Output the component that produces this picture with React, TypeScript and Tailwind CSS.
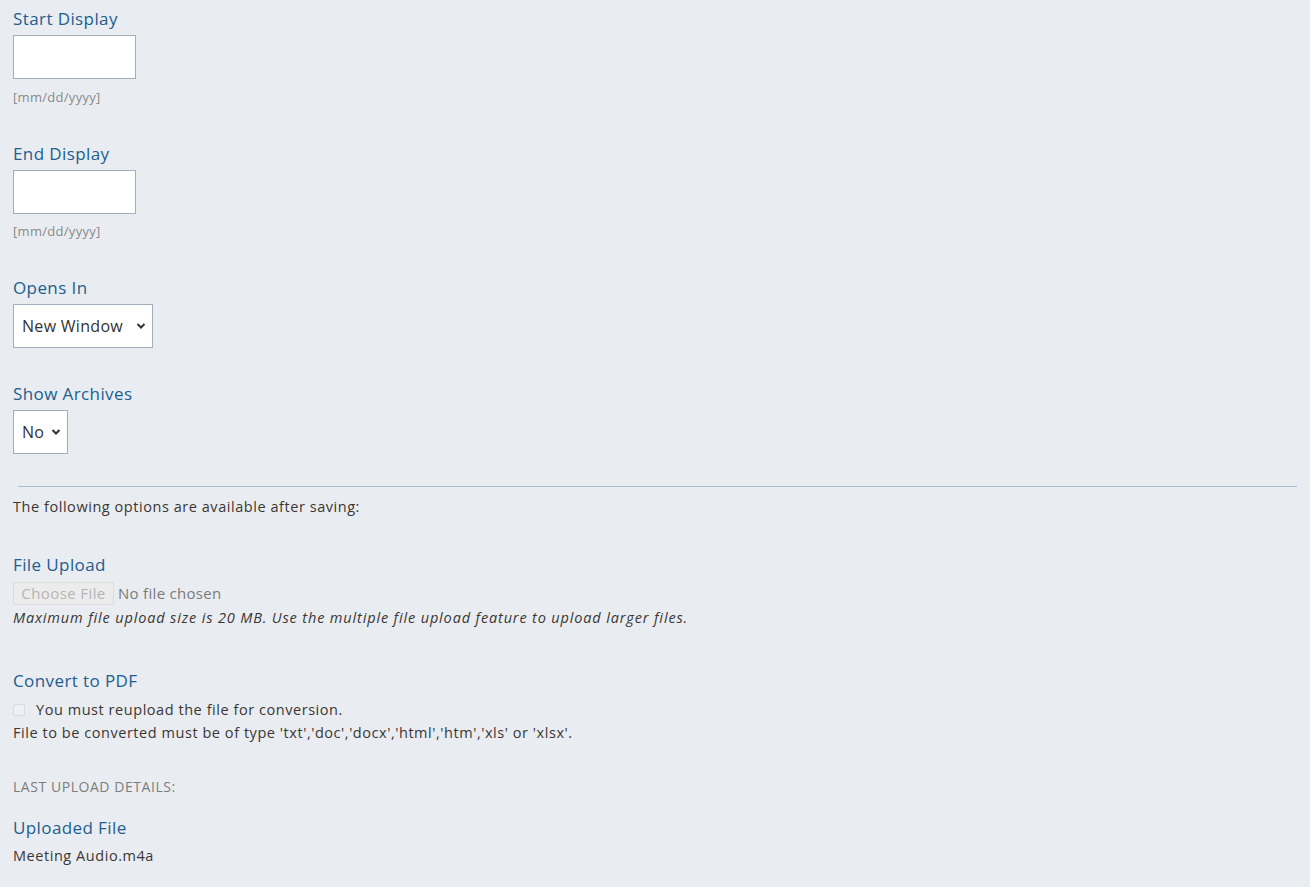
import React from 'react'

const font = { fontFamily: '"Open Sans", Lato, sans-serif' }

function Label({ children, className = '' }: { children: React.ReactNode; className?: string }) {
  return <div className={`text-[17px] leading-[24px] tracking-[0.4px] text-[#215d8f] ${className}`}>{children}</div>
}

function Chevron() {
  return (
    <svg width="10" height="7" viewBox="0 0 10 7" className="pointer-events-none absolute right-[6px] top-1/2 -translate-y-1/2">
      <path d="M1.5 1.5 L5 5 L8.5 1.5" fill="none" stroke="#333" strokeWidth="2" />
    </svg>
  )
}

function FakeSelect({ value, width }: { value: string; width: string }) {
  return (
    <div className={`relative mt-[4px] h-[44px] ${width} border border-[#a3aebb] bg-white`}>
      <div className="pl-[8px] text-[16px] leading-[42px] tracking-[0.3px] text-[#333]">{value}</div>
      <Chevron />
    </div>
  )
}

const body = 'text-[14.5px] leading-[20px] tracking-[0.55px] text-[#3b3633]'

export default function App() {
  return (
    <div className="min-h-[887px] bg-[#e9edf1] px-[13px] pt-[7px]" style={font}>
      <Label>Start Display</Label>
      <input className="mt-[4px] block h-[44px] w-[123px] border border-[#a3aebb] bg-white" />
      <div className="mt-[9px] text-[13px] leading-[18px] tracking-[0.3px] text-[#8a8a8a]">[mm/dd/yyyy]</div>

      <Label className="mt-[36px]">End Display</Label>
      <input className="mt-[4px] block h-[44px] w-[123px] border border-[#a3aebb] bg-white" />
      <div className="mt-[8px] text-[13px] leading-[18px] tracking-[0.3px] text-[#8a8a8a]">[mm/dd/yyyy]</div>

      <Label className="mt-[36px]">Opens In</Label>
      <FakeSelect value="New Window" width="w-[140px]" />

      <Label className="mt-[34px]">Show Archives</Label>
      <FakeSelect value="No" width="w-[55px]" />

      <div className="ml-[5px] mt-[32px] h-px bg-[#a9bdd0]" />

      <p className={`mt-[10px] ${body}`}>The following options are available after saving:</p>

      <Label className="mt-[36px]">File Upload</Label>
      <div className="mt-[5px] flex h-[23px] items-center">
        <span className="flex h-[23px] w-[101px] items-center justify-center rounded-[2px] border border-[#dcdcdc] bg-[#ececec] text-[15px] tracking-[0.4px] text-[#b5b5b5]">
          Choose File
        </span>
        <span className="ml-[4px] text-[15px] tracking-[0.3px] text-[#7a7a7a]">No file chosen</span>
      </div>
      <p className="mt-[3px] text-[14.5px] italic leading-[20px] tracking-[0.85px] text-[#3b3633]">
        Maximum file upload size is 20 MB. Use the multiple file upload feature to upload larger files.
      </p>

      <Label className="mt-[41px]">Convert to PDF</Label>
      <div className="mt-[7px] flex h-[20px] items-center">
        <span className="h-[12px] w-[12px] shrink-0 rounded-[2px] border border-[#d6dbe0] bg-[#eef1f4]" />
        <span className={`ml-[11px] ${body}`}>You must reupload the file for conversion.</span>
      </div>
      <p className={`mt-[3px] ${body}`}>
        File to be converted must be of type 'txt','doc','docx','html','htm','xls' or 'xlsx'.
      </p>

      <div className="mt-[35px] text-[14px] uppercase leading-[18px] tracking-[0.55px] text-[#7d7d7d]">Last Upload Details:</div>

      <Label className="mt-[20px]">Uploaded File</Label>
      <p className={`mt-[6px] ${body}`}>Meeting Audio.m4a</p>
    </div>
  )
}
